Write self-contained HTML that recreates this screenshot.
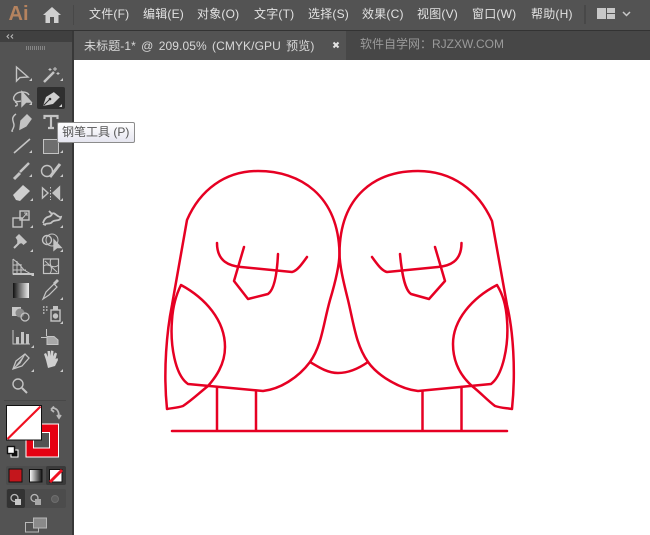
<!DOCTYPE html>
<html><head><meta charset="utf-8"><style>
html,body{margin:0;padding:0;background:#fff}
#p{position:relative;width:650px;height:535px;overflow:hidden;background:#fff;font-family:"Liberation Sans","Noto Sans CJK SC",sans-serif}
.a{position:absolute}
.m{position:absolute;top:6px;font-size:12px;line-height:16px;color:#e2e2e2;white-space:nowrap;letter-spacing:.2px}
svg{position:absolute;left:0;top:0}
</style></head><body><div id="p">
<div class="a" style="left:0;top:0;width:650px;height:30px;background:#535353"></div>
<div class="a" style="left:0;top:30px;width:650px;height:1px;background:#333"></div>
<div class="a" style="left:0;top:31px;width:650px;height:29px;background:#474747"></div>
<div class="a" style="left:73px;top:31px;width:273px;height:29px;background:#535353"></div>
<div class="a" style="left:0;top:31px;width:72px;height:504px;background:#535353"></div>
<div class="a" style="left:0;top:31px;width:72px;height:11px;background:#404040"></div>
<div class="a" style="left:72px;top:31px;width:2px;height:504px;background:#383838"></div>
<div class="a" style="left:74px;top:60px;width:576px;height:475px;background:#fff"></div>

<div class="a" style="left:8.500px;top:1px;font-size:20px;line-height:26px;font-weight:bold;color:#b5835f">Ai</div>
<div class="m" style="left:89px">文件(F)</div>
<div class="m" style="left:143px">编辑(E)</div>
<div class="m" style="left:197px">对象(O)</div>
<div class="m" style="left:254px">文字(T)</div>
<div class="m" style="left:308px">选择(S)</div>
<div class="m" style="left:362px">效果(C)</div>
<div class="m" style="left:417px">视图(V)</div>
<div class="m" style="left:472px">窗口(W)</div>
<div class="m" style="left:531px">帮助(H)</div>
<div class="a" style="left:84px;top:38px;font-size:12px;line-height:16px;color:#d8d8d8;white-space:nowrap;letter-spacing:.1px;word-spacing:1.800px">未标题-1* @ 209.05% (CMYK/GPU 预览)</div>
<div class="a" style="left:360px;top:36px;font-size:12px;line-height:16px;color:#9a9a9a;white-space:nowrap">软件自学网：RJZXW.COM</div>

<svg width="650" height="535" viewBox="0 0 650 535">
<!-- home -->
<path d="M43 15 L52 7 L61 15 L58.500 15 L58.500 23 L54 23 L54 17 L50 17 L50 23 L45.500 23 L45.500 15Z" fill="#d0d0d0"/>
<rect x="73" y="5" width="1" height="20" fill="#484848"/>
<rect x="584" y="5" width="2" height="19" fill="#484848"/>
<!-- workspace -->
<rect x="597" y="8" width="9" height="11" fill="#c8c8c8"/><rect x="607" y="8" width="8" height="5" fill="#c8c8c8"/><rect x="607" y="14" width="8" height="5" fill="#c8c8c8"/>
<path d="M623 12 L626.500 15.500 L630 12" fill="none" stroke="#c8c8c8" stroke-width="1.500"/>
<!-- tab close -->
<path d="M333.500 42.500 L338.500 47.500 M338.500 42.500 L333.500 47.500" stroke="#e4e4e4" stroke-width="2"/>
<!-- panel collapse -->
<path d="M9 34.500 L7 36.500 L9 38.500 M13 34.500 L11 36.500 L13 38.500" fill="none" stroke="#bbb" stroke-width="1"/>
<!-- grip -->
<path d="M26.500 46v4M28.500 46v4M30.500 46v4M32.500 46v4M34.500 46v4M36.500 46v4M38.500 46v4M40.500 46v4M42.500 46v4M44.500 46v4" stroke="#858585" stroke-width="1"/>
<!-- active tool -->
<rect x="37" y="87" width="28" height="22" rx="2" fill="#2f2f2f"/>
<g fill="none" stroke="#c4c4c4" stroke-width="1.400">
<!-- selection -->
<path d="M16.500 67 L16.500 81 L20 77.500 L28 77 Z"/>
<!-- wand -->
<path d="M44 82 L54 72" stroke-width="2.500"/>
<path d="M55 67v4M53 69h4M58 72v3M56.500 73.500h3M50 68v3M48.500 69.500h3" stroke-width="1"/>
<!-- rotate/lasso -->
<path d="M21 101 C14 103 12 99 15 95 C18 91 27 91 29 95"/>
<path d="M15 102 C18 103 18 106 15 106"/>
<path d="M22 92 L22 106 L26 102 L31 102 Z" fill="#c4c4c4"/>
<!-- curvature -->
<path d="M20 129 L21 121 L27 115 L31 119 L26 126 Z" fill="#c4c4c4" stroke="#c4c4c4"/>
<path d="M16 114 C10 118 14 122 14 125 C14 129 10 132 13 131"/>
<!-- T -->
<path d="M44.500 119 V116 H57.500 V119 M51 116 V128 M48 128 H54" stroke-width="2.200"/>
<!-- line -->
<path d="M14 153 L30 139" stroke-width="1.600"/>
<!-- brush -->
<path d="M14 179 L20 173" stroke-width="3"/><path d="M20 172 L29 163" stroke-width="2.500"/>
<!-- blob -->
<circle cx="47" cy="171" r="5.500"/><path d="M50 177 L60 164" stroke-width="3"/>
<!-- eraser -->
<path d="M13 195 L23 185 L30 191 L20 201 L16 200 Z" fill="#cfcfcf" stroke="none"/>
<!-- reflect -->
<path d="M42.500 188 L42.500 198 L48 193 Z"/><path d="M59.500 187 L59.500 199 L53 193 Z" fill="#c4c4c4"/>
<path d="M50.500 187v13" stroke-dasharray="1.500 1.500" stroke-width="1"/>
<!-- scale -->
<rect x="20" y="211" width="9" height="9"/><rect x="13" y="218" width="9" height="9"/>
<path d="M22 219 L27 213 M24 213h3v3" stroke-width="1"/>
<!-- warp -->
<path d="M43 223 C46 214 50 219 52 214 C54 211 58 218 61 217 C60 222 55 219 52 222 C50 225 47 222 44 225" stroke-width="1.800"/>
<path d="M49 211 L52 214 M43 224l3 1" stroke-width="1.800"/>
<!-- pin -->
<path d="M14 248 L20 242" stroke-width="2"/><path d="M19 235 L26 242 L23.500 244 L22 242.500 L18 243 L18 240 L16.500 237.500 Z" fill="#c4c4c4" stroke-width="1.500"/>
<!-- shape builder -->
<circle cx="47" cy="240" r="4.500"/><circle cx="52" cy="240" r="6" stroke-width="1"/>
<path d="M54 240 L54 250 L57 247.500 L61 247.500 Z" fill="#c4c4c4"/>
<!-- perspective -->
<path d="M13 259 V274 H31 L24 270 L19 264 L13 259 M13 265 H21 M13 270 H26 M17 261 V274 M21 264 V274" stroke-width="1"/>
<path d="M13 274 H34" stroke-width="2"/>
<!-- mesh -->
<rect x="43.500" y="259" width="15" height="14.500" stroke-width="1.200"/>
<path d="M43.500 266 C48 262 53 270 58.500 265 M51 259 C48 264 54 268 50 273.500 M45 261 L57 272" stroke-width="1"/>
<!-- eyedropper -->
<path d="M43 299 L46 292 L54 284 L57 287 L49 295 Z" stroke-width="1.200"/><path d="M54 284 L58 280" stroke-width="2.800"/>
<!-- symbol -->
<rect x="51" y="310" width="9" height="11"/><circle cx="55.500" cy="316" r="2" fill="#c4c4c4"/><rect x="53" y="306" width="5" height="4" fill="#c4c4c4" stroke="none"/>
<path d="M43 307h1.500M46 307h1.500M43 310h1.500M46 310h1.500M43 313h1.500" stroke-width="1.400"/>
<!-- graph -->
<path d="M13 330 V344 H30" stroke-width="1"/><rect x="16" y="337" width="3" height="7" fill="#c4c4c4" stroke="none"/><rect x="21" y="332" width="3" height="12" fill="#c4c4c4" stroke="none"/><rect x="26" y="334" width="3" height="10" fill="#c4c4c4" stroke="none"/>
<!-- artboard -->
<path d="M41 337.500 H47 M46.500 329 V336" stroke-width="1"/>
<path d="M47 336.500 H54 L58 340 V344.500 H47 Z" fill="#a8a8a8" stroke-width="1"/>
<!-- knife -->
<path d="M13 369 L16 361 L25 354 L29 358 L22 366 Z" stroke-width="1.300"/><path d="M13 369 L20 363 L25 354" fill="#c4c4c4" stroke-width="1"/>
<!-- zoom -->
<circle cx="18" cy="384" r="5"/><path d="M22 388 L27 393" stroke-width="2"/>
</g>
<!-- pen active -->
<path d="M43 106 L46 97 L54 92 L60 97 L53 104 Z" fill="#cfcfcf"/>
<path d="M43.500 105.500 L50 99" stroke="#2f2f2f" stroke-width="1"/>
<circle cx="50" cy="99" r="1.300" fill="#2f2f2f"/>
<path d="M54 91.500 L60.500 97" stroke="#2f2f2f" stroke-width="1"/>
<path d="M62 107h-3l3-3z" fill="#ddd"/>
<!-- gradient tool -->
<defs><linearGradient id="g"><stop offset="0" stop-color="#111"/><stop offset="1" stop-color="#eee"/></linearGradient>
<linearGradient id="h"><stop offset="0" stop-color="#fff"/><stop offset="1" stop-color="#111"/></linearGradient></defs>
<rect x="13" y="283" width="16" height="15" fill="url(#g)"/>
<!-- shape fill -->
<rect x="43.500" y="139.500" width="15" height="14" fill="#6e6e6e" stroke="#c4c4c4" stroke-width="1"/>
<!-- blend -->
<rect x="12" y="307" width="9" height="9" fill="#c8c8c8"/><circle cx="20" cy="313" r="4.500" fill="#8a8a8a"/><circle cx="25" cy="317" r="4" fill="none" stroke="#c4c4c4" stroke-width="1.200"/>
<!-- hand -->
<path d="M46 360 L44 354 L46 353 L48 357 L47.500 351 L50 351 L50.500 356 L51 350.500 L53.500 351 L53 356.500 L55 352.500 L57 353.500 L55.500 359 L57.500 358 L58 360 L55 366 L48 368 Z" fill="#d0d0d0"/>
<!-- corner triangles -->
<g fill="#c8c8c8">
<path d="M32 81h-3l3-3zM63 81h-3l3-3zM32 105h-3l3-3zM32 153h-3l3-3zM63 153h-3l3-3zM32 177h-3l3-3zM63 177h-3l3-3zM33 201h-3l3-3zM63 201h-3l3-3zM33 228h-3l3-3zM63 228h-3l3-3zM33 252h-3l3-3zM63 252h-3l3-3zM34 276h-3l3-3zM63 324h-3l3-3zM63 300h-3l3-3zM34 348h-3l3-3zM34 372h-3l3-3zM63 372h-3l3-3z"/>
</g>
<!-- divider -->
<rect x="4" y="400" width="62" height="1" fill="#484848"/>
<!-- stroke swatch -->
<rect x="25.500" y="423.500" width="33.500" height="34" fill="#fff"/>
<rect x="26.500" y="424.500" width="31.500" height="32" fill="#e60012"/>
<rect x="33" y="432" width="17" height="16.500" fill="#fff"/>
<rect x="34" y="433" width="15" height="14.500" fill="#535353"/>
<!-- fill swatch -->
<rect x="6" y="405" width="36" height="35.500" fill="#111"/>
<rect x="7" y="406" width="34" height="33.500" fill="#fff"/>
<path d="M7.500 439 L40.500 406.500" stroke="#f01020" stroke-width="2.200"/>
<!-- swap -->
<path d="M52 408 C57 408 59 411 59 417 M51 409.500 l3 -3 M51 409.500 l3 2.500 M57 415 l2 3 l2 -3" fill="none" stroke="#b8b8b8" stroke-width="1.800"/>
<!-- default -->
<rect x="11" y="450" width="7" height="7" fill="#111" stroke="#fff" stroke-width="1"/>
<rect x="7.500" y="446.500" width="7" height="7" fill="#fff" stroke="#111" stroke-width="1.400"/>
<!-- color mode row -->
<rect x="6" y="466" width="60" height="19" rx="2" fill="#4c4c4c"/>
<rect x="46" y="466" width="20" height="19" rx="2" fill="#3a3a3a"/>
<rect x="9" y="469" width="13" height="13" fill="#c4161c" stroke="#111" stroke-width="1"/>
<rect x="29.500" y="469.500" width="12.500" height="12.500" fill="url(#h)" stroke="#111" stroke-width="1"/>
<rect x="49.500" y="469.500" width="12.500" height="12.500" fill="#fff" stroke="#111" stroke-width="1"/>
<path d="M50 482 L62 470" stroke="#f01020" stroke-width="3"/>
<!-- draw mode row -->
<rect x="6" y="489" width="60" height="19" rx="2" fill="#4c4c4c"/>
<rect x="7" y="489" width="18" height="19" rx="2" fill="#333"/>
<g fill="none" stroke="#b8b8b8" stroke-width="1.300">
<circle cx="14.500" cy="498" r="3.500"/><circle cx="34.500" cy="498" r="3.500"/>
</g>
<rect x="15" y="499" width="6" height="6" fill="#c8c8c8"/>
<rect x="35" y="499" width="6" height="6" fill="#a8a8a8"/>
<circle cx="55" cy="499" r="3.500" fill="#5e5e5e" stroke="#6e6e6e" stroke-width="1"/>
<!-- screen mode -->
<rect x="25.500" y="522.500" width="13" height="9.500" fill="#535353" stroke="#b8b8b8" stroke-width="1"/>
<rect x="33.500" y="518" width="13" height="10" fill="#8a8a8a" stroke="#b8b8b8" stroke-width="1"/>

<!-- artwork -->
<g fill="none" stroke="#e60023" stroke-width="2.500" stroke-linejoin="round" stroke-linecap="round">
<path d="M167 409 C163 370 167 330 172 305 L187 220 C200 190 225 171 258 171 C300 171 338 195 339.500 253 C339.500 265 336 280 330 300 C323 325 322 345 310 362 C298 378 280 389 263 391 L188 384 C175 375 170 345 172 320 C173 305 176 295 181 285 C205 298 225 320 225 347 C225 365 215 378 208 386 C198 394 192 400 183 406 C177 408 172 408 167 409Z"/>
<path d="M217 243 C217 262 230 266 241 267 L292 272 C297 271 302 264 307 257"/>
<path d="M244 247 L234 281 L248 299 L268 294 C274 290 277 275 278 254"/>
<path d="M512 409 C516 370 513 330 507 305 L492 221 C478 190 452 171 418 171 C376 171 340 195 339.500 253 C339.500 265 343 280 348 300 C354 325 356 345 368 362 C378 376 400 389 418 391 L491 384 C503 375 509 345 507 320 C506 305 503 295 497 285 C472 298 453 320 453 344 C453 365 463 378 472 386 C482 394 487 400 495 406 C501 408 506 408 512 409Z"/>
<path d="M461.500 243 C461.500 262 449 266 438 267 L387 272 C382 271 377 264 372 257"/>
<path d="M435 247 L445 281 L429 299 L411 294 C405 290 402 275 400 254"/>
<path d="M310 362 C320 368 328 373 338 373 C348 373 358 369 368 362"/>
<path d="M217 387V431M256 391V431M422.500 391V431M461.500 387V431M172 431H507"/>
</g>
</svg>
<!-- tooltip -->
<div class="a" style="left:57px;top:122px;width:78px;height:21px;box-sizing:border-box;border:1px solid #8c8c8c;border-radius:2px;background:linear-gradient(#fff,#e6e6f0);color:#555;font-size:12px;line-height:19px;padding-left:4px;white-space:nowrap">钢笔工具 (P)</div>
</div></body></html>
